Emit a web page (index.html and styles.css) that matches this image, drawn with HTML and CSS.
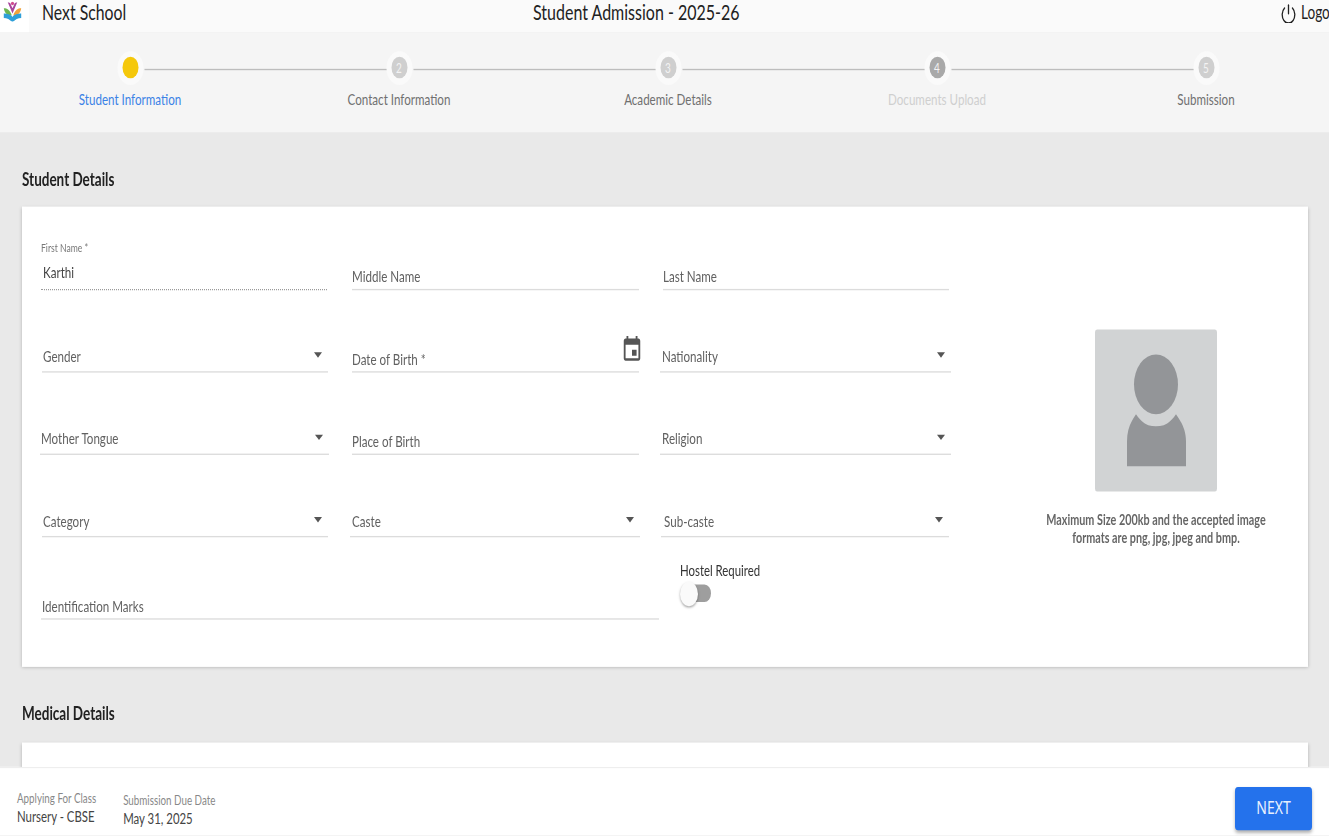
FILE: index.html
```html
<!DOCTYPE html>
<html lang="en">
<head>
<meta charset="utf-8">
<title>Student Admission - 2025-26</title>
<link rel="stylesheet" href="styles.css">
</head>
<body>
<div class="app">
  <header class="topbar">
    <div class="logo-cell">
      <svg class="logo" viewBox="0 0 24 24" preserveAspectRatio="none">
        <path d="M1 8c4 0 8 2 10 8-5 1-9-2-10-8z" fill="#6cb651"/>
        <path d="M23 8c-4 0-8 2-10 8 5 1 9-2 10-8z" fill="#f0a23c"/>
        <path d="M6 1l6 13 6-13-3 1-3 6-3-6z" fill="#a8459c"/>
        <ellipse cx="12" cy="2.5" rx="2" ry="2" fill="#d14b8f"/>
        <path d="M1 14c4 0 9 1 11 4 2-3 7-4 11-4v5c-4 0-8 2-11 5-3-3-7-5-11-5z" fill="#2f9fd8"/>
      </svg>
    </div>
    <div class="brand">Next School</div>
    <div class="page-title">Student Admission - 2025-26</div>
    <div class="logout">
      <svg class="power" viewBox="0 0 15 14" fill="none" stroke="#222" stroke-width="1.3" stroke-linecap="round">
        <path d="M7.5 .8V7"/>
        <path d="M3.5 3A6.3 6.3 0 1 0 11.5 3"/>
      </svg>
      <span class="logout-text">Logo</span>
    </div>
  </header>

  <nav class="stepper">
    <div class="step step-line">
      <div class="halo"><span class="dot dot-active"></span></div>
      <div class="step-label label-active">Student Information</div>
    </div>
    <div class="step step-line">
      <div class="halo"><span class="dot">2</span></div>
      <div class="step-label">Contact Information</div>
    </div>
    <div class="step step-line">
      <div class="halo"><span class="dot">3</span></div>
      <div class="step-label">Academic Details</div>
    </div>
    <div class="step step-line">
      <div class="halo"><span class="dot dot-dark">4</span></div>
      <div class="step-label label-faint">Documents Upload</div>
    </div>
    <div class="step">
      <div class="halo"><span class="dot">5</span></div>
      <div class="step-label">Submission</div>
    </div>
  </nav>

  <main class="content">
    <h2 class="section-title">Student Details</h2>
    <section class="card card-form">
      <div class="form">
        <div class="row r1">
          <div class="field filled">
            <span class="mini-label">First Name *</span>
            <span class="value">Karthi</span>
          </div>
          <div class="field text"><span>Middle Name</span></div>
          <div class="field text"><span>Last Name</span></div>
        </div>
        <div class="row r2">
          <div class="field select in1"><span>Gender</span><i class="arrow"></i></div>
          <div class="field date"><span>Date of Birth *</span>
            <svg class="calendar" viewBox="0 0 24 24"><path d="M17 12h-5v5h5v-5zM16 1v2H8V1H6v2H5c-1.11 0-1.99.9-1.99 2L3 19c0 1.1.89 2 2 2h14c1.1 0 2-.9 2-2V5c0-1.1-.9-2-2-2h-1V1h-2zm3 18H5V8h14v11z"/></svg>
          </div>
          <div class="field select in2"><span>Nationality</span><i class="arrow"></i></div>
        </div>
        <div class="row r3">
          <div class="field select in1"><span>Mother Tongue</span><i class="arrow"></i></div>
          <div class="field date"><span>Place of Birth</span></div>
          <div class="field select in2"><span>Religion</span><i class="arrow"></i></div>
        </div>
        <div class="row r4">
          <div class="field select in1"><span>Category</span><i class="arrow"></i></div>
          <div class="field select in2"><span>Caste</span><i class="arrow"></i></div>
          <div class="field select in3"><span>Sub-caste</span><i class="arrow"></i></div>
        </div>
        <div class="row r5">
          <div class="field text in1"><span>Identification Marks</span></div>
          <div class="hostel">
            <div class="hostel-label">Hostel Required</div>
            <div class="toggle"><span class="track"></span><span class="thumb"></span></div>
          </div>
        </div>
      </div>
      <aside class="photo">
        <div class="photo-box">
          <svg class="person" viewBox="0 0 122 163" preserveAspectRatio="none">
            <ellipse cx="61" cy="55" rx="22" ry="30" fill="#939598"/>
            <path d="M32 137V112C32 100 36 92 41 85C47 94 53 97 61 97C69 97 75 94 81 85C86 92 91 100 91 112V137Z" fill="#939598"/>
          </svg>
        </div>
        <p class="photo-note">Maximum Size 200kb and the accepted image formats are png, jpg, jpeg and bmp.</p>
      </aside>
    </section>
    <h2 class="section-title section-second">Medical Details</h2>
    <section class="card card-next"></section>
  </main>

  <footer class="footer">
    <div class="meta">
      <div class="meta-item">
        <div class="meta-label">Applying For Class</div>
        <div class="meta-value">Nursery - CBSE</div>
      </div>
      <div class="meta-item meta-second">
        <div class="meta-label">Submission Due Date</div>
        <div class="meta-value">May 31, 2025</div>
      </div>
    </div>
    <button class="next" type="button"><span>NEXT</span></button>
  </footer>
</div>
</body>
</html>
```
FILE: styles.css
```css
* { box-sizing: border-box; }
html, body { margin: 0; height: 836px; overflow: hidden; background: #e9e9e9; }
body { font-family: "Lato", "Liberation Sans", sans-serif; color: #666; }

/* The reference is stretched vertically by 1.35 */
.app {
  width: 1329px;
  height: 619.26px;
  transform: scaleY(1.35);
  transform-origin: top left;
  display: flex;
  flex-direction: column;
  overflow: hidden;
}

/* top bar */
.topbar {
  flex: none;
  height: 24.4px;
  background: #fafafa;
  display: grid;
  grid-template-columns: 29px 504px 1fr 48px;
  align-items: start;
  overflow: hidden;
  color: #222;
}
.logo-cell { height: 100%; background: #fff; display: flex; align-items: flex-start; padding: .7px 0 0 3px; }
.logo { width: 19px; height: 15.5px; display: block; }
.brand { padding-left: 13px; font-size: 15.8px; line-height: 17px; margin-top: 0; }
.page-title { font-size: 16px; line-height: 17px; margin-top: 0; }
.logout { display: flex; align-items: center; gap: 5px; margin-top: 2.6px; white-space: nowrap; }
.power { width: 15px; height: 14px; flex: none; }
.logout-text { font-size: 13.6px; line-height: 15px; margin-top: -1px; }

/* stepper */
.stepper {
  flex: none;
  height: 73.3px;
  background: #f5f5f5;
  display: grid;
  grid-template-columns: repeat(5, 269px);
  padding: 13.4px 0 0 0;
  transform: translateX(-4.5px);
  width: 1345px;
}
.step { position: relative; display: flex; flex-direction: column; align-items: center; }
.step-line::after {
  content: "";
  position: absolute;
  left: 148.5px;
  width: 243px;
  top: 13.3px;
  height: 1px;
  background: #bdbdbd;
}
.halo {
  width: 26px;
  height: 25px;
  border-radius: 50%;
  background: #fafafa;
  display: flex;
  align-items: center;
  justify-content: center;
}
.dot {
  width: 16px;
  height: 16px;
  border-radius: 50%;
  background: #cfcfcf;
  color: #f3f3f3;
  font-size: 10px;
  line-height: 16px;
  text-align: center;
}
.dot-active { background: #f5c80b; }
.dot-dark { background: #a9a9a9; }
.step-label {
  margin-top: 4.3px;
  font-size: 11.6px;
  line-height: 14px;
  color: #707070;
  white-space: nowrap;
}
.label-active { color: #3b82e6; }
.label-faint { color: #cfcfcf; }

/* main */
.content { flex: 1; min-height: 0; padding: 0 21px 0 22px; overflow: hidden; }
.section-title {
  margin: 26.5px 0 11.1px;
  font-size: 13.5px;
  line-height: 18px;
  font-weight: 700;
  color: #222;
}
.section-second { margin: 25px 0 12.6px; }
.card { background: #fff; box-shadow: 0 1px 3px rgba(0, 0, 0, .25); }
.card-form { height: 340.7px; display: flex; }
.card-next { height: 100px; }

.form { flex: none; width: 982px; padding-top: 21.5px; display: flex; flex-direction: column; gap: 21px; }
.row { display: grid; height: 40px; }
.row > .field:nth-child(2) { margin: 0 var(--gap-b, 0) 0 var(--gap-a, 0); }
.r1 { --gap-a: 25px; --gap-b: 24px; padding-left: 19px; grid-template-columns: 286px 336px 286px; }
.r2 { --gap-a: 24px; --gap-b: 21px; padding-left: 20px; grid-template-columns: 286px 332px 291px; }
.r3 { --gap-a: 23px; --gap-b: 21px; padding-left: 18px; grid-template-columns: 289px 331px 291px; }
.r4 { --gap-a: 22px; --gap-b: 21px; padding-left: 20px; grid-template-columns: 286px 333px 288px; }
.r5 { padding-left: 19px; grid-template-columns: 618px auto; column-gap: 21px; justify-content: start; }

.field {
  position: relative;
  display: flex;
  align-items: flex-end;
  justify-content: space-between;
  border-bottom: 1px solid #dcdcdc;
  font-size: 11.6px;
  line-height: 14px;
  color: #616161;
}
.field.text { padding-bottom: 1.8px; }
.field.date { padding-bottom: 2px; }
.field.select { padding-bottom: 3.9px; padding-right: 6px; }
.in1 { padding-left: 1px; }
.in2 { padding-left: 2px; }
.in3 { padding-left: 3px; }
.arrow {
  width: 0;
  height: 0;
  margin-bottom: 5.6px;
  border-left: 4.5px solid transparent;
  border-right: 4.5px solid transparent;
  border-top: 4px solid #555;
}
.filled {
  display: block;
  padding: 4.2px 0 0;
  border-bottom: 1px dotted #9a9a9a;
}
.mini-label { display: block; font-size: 8.6px; line-height: 10px; color: #777; }
.value { display: block; margin: 6.1px 0 0 2px; color: #444; font-size: 11.6px; line-height: 14px; }
.calendar { width: 22px; height: 22px; fill: #555; margin: 0 -4px 2.6px 0; align-self: flex-end; }

.hostel { margin-top: -2.3px; }
.hostel-label { font-size: 11.4px; line-height: 14px; color: #333; white-space: nowrap; }
.toggle { position: relative; width: 31px; height: 18.5px; margin-top: .4px; }
.track {
  position: absolute;
  left: 5px;
  top: 2.5px;
  width: 26px;
  height: 13px;
  border-radius: 7px;
  background: #9e9e9e;
}
.thumb {
  position: absolute;
  left: 0;
  top: 0;
  width: 18px;
  height: 18.5px;
  border-radius: 50%;
  background: #fafafa;
  box-shadow: 0 1px 2px rgba(0, 0, 0, .35);
}

/* photo */
.photo { flex: 1; padding-top: 90.4px; display: flex; flex-direction: column; align-items: center; }
.photo-box { width: 122px; height: 120.7px; background: #d1d3d4; border-radius: 2px; }
.person { width: 100%; height: 100%; display: block; }
.photo-note {
  width: 226px;
  margin: 15px 0 0;
  text-align: center;
  font-size: 10.8px;
  line-height: 12.6px;
  font-weight: 700;
  color: #666;
}

/* footer */
.footer {
  flex: none;
  height: 51.1px;
  background: #fff;
  border-top: 1px solid #eee;
  padding: 13.7px 17px 0 17px;
  display: flex;
  justify-content: space-between;
  align-items: flex-start;
  position: relative;
}
.meta { display: flex; gap: 27px; margin-top: 2px; }
.meta-second .meta-label { padding-top: 1.4px; }
.meta-second .meta-value { margin-top: .5px; }
.meta-label { font-size: 9.8px; line-height: 12px; color: #888; white-space: nowrap; }
.meta-value { margin-top: 1.6px; font-size: 11.4px; line-height: 14px; color: #444; white-space: nowrap; }
.next {
  width: 77px;
  height: 32px;
  border: 0;
  border-radius: 3px;
  background: #2472ec;
  color: #e8f0fe;
  font-family: "Noto Sans", "Liberation Sans", sans-serif;
  font-size: 14px;
  line-height: 18px;
  padding: 0 0 2px;
  box-shadow: 0 2px 3px rgba(0, 0, 0, .3);
}
```
